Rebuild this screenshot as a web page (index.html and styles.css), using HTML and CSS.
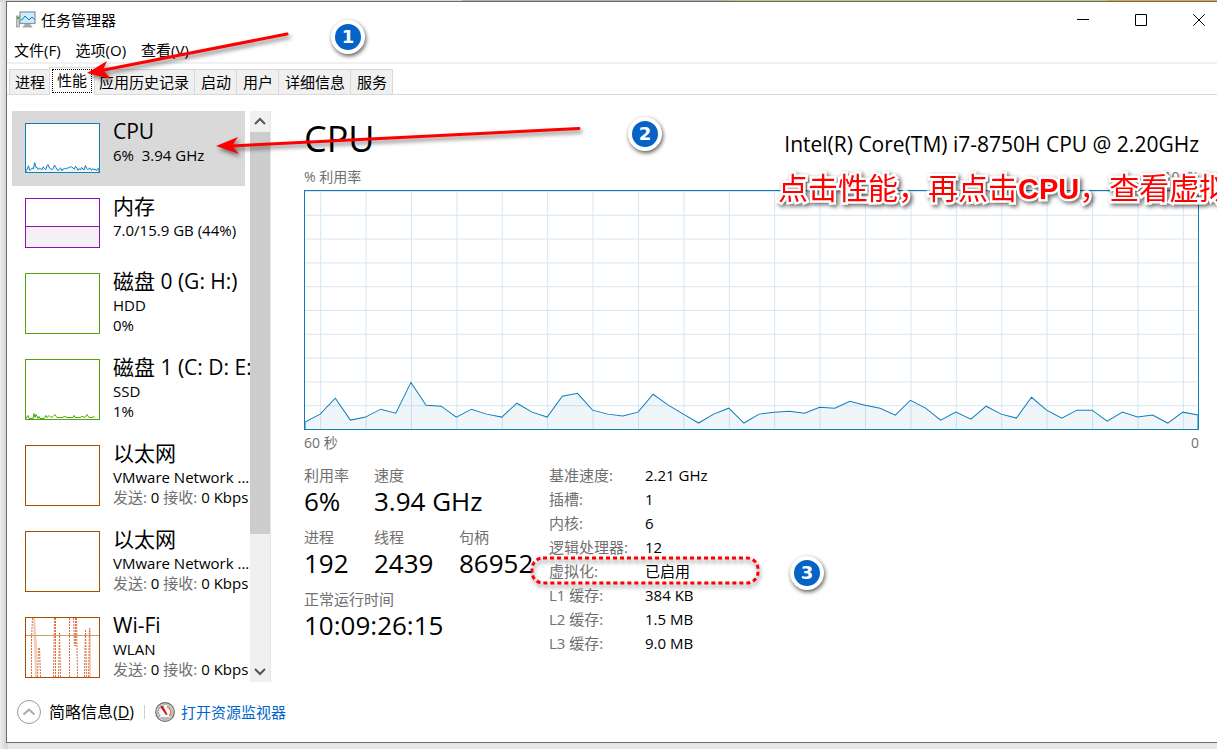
FILE: index.html
```html
<!DOCTYPE html>
<html lang="zh-CN">
<head>
<meta charset="utf-8">
<title>任务管理器</title>
<link rel="stylesheet" href="styles.css">
</head>
<body>
<svg class="defs" aria-hidden="true">
  <defs>
    <path id="cpu-area" d="M0 240V233L15 225 30 209 45 231 60 228 75 220 90 224 105 193 120 216 135 217 150 228 165 220 180 225 195 228 210 214 225 223 240 228 255 207 270 204 285 221 300 225 315 227 330 223 345 205 360 216 375 225 390 234 405 225 420 219 435 234 450 225 465 223 480 222 495 224 510 218 525 219 540 212 555 216 570 219 585 226 600 211 615 219 630 231 645 223 660 230 675 217 690 225 705 229 720 208 735 221 750 229 765 221 780 221 795 232 810 223 825 228 840 226 855 234 870 223 885 226V240" vector-effect="non-scaling-stroke"/>
    <pattern id="grid-cols" x="15" width="45" height="240" patternUnits="userSpaceOnUse"><rect width="1" height="240" fill="#d5e7f2"/></pattern>
    <pattern id="grid-rows" width="885" height="24" patternUnits="userSpaceOnUse"><rect width="885" height="1" fill="#d5e7f2"/></pattern>
  </defs>
</svg>

<div class="window">
  <header class="titlebar">
    <svg class="app-icon" viewBox="0 0 20 18" aria-hidden="true">
      <rect x=".5" y="5" width="3" height="11" fill="#c8c8c8" stroke="#858585" stroke-width=".6"/>
      <rect x="1" y="6" width="2" height="2" fill="#2cbb35"/>
      <rect x="4" y="1" width="15" height="11.500" fill="#c9edfa" stroke="#8b9298" stroke-width="1.200"/>
      <path d="M5 9l1.500-.5L9 5l4 4 3-3 2.500 2.500" fill="none" stroke="#1677a8"/>
      <path d="M9 13h5l3 3.500H6z" fill="#aaa"/>
    </svg>
    <h1>任务管理器</h1>
    <div class="controls">
      <button aria-label="最小化"><svg viewBox="0 0 12 12"><path d="M0 5.500h12"/></svg></button>
      <button aria-label="最大化"><svg viewBox="0 0 12 12"><path d="M.5.500h11v11H.5z"/></svg></button>
      <button aria-label="关闭"><svg viewBox="0 0 12 12"><path d="M.3.300l11.400 11.400M11.700.300.300 11.700"/></svg></button>
    </div>
  </header>
  <nav class="menu">
    <button>文件(F)</button><button>选项(O)</button><button>查看(V)</button>
  </nav>
  <div class="tabs" role="tablist">
    <button role="tab">进程</button>
    <button role="tab" class="active" aria-selected="true"><span>性能</span></button>
    <button role="tab">应用历史记录</button>
    <button role="tab">启动</button>
    <button role="tab">用户</button>
    <button role="tab">详细信息</button>
    <button role="tab">服务</button>
  </div>

  <div class="content">
    <aside class="sidebar">
      <div class="list">
        <button class="item short selected">
          <svg class="mini blue" viewBox="0 0 885 240" preserveAspectRatio="none"><use href="#cpu-area"/></svg>
          <span class="info"><b>CPU</b><span>6%&nbsp; 3.94 GHz</span></span>
        </button>
        <button class="item short">
          <svg class="mini purple" viewBox="0 0 74 48" preserveAspectRatio="none"><path d="M-1 27.500h76V50H-1z"/></svg>
          <span class="info"><b>内存</b><span>7.0/15.9 GB (44%)</span></span>
        </button>
        <button class="item">
          <svg class="mini green"></svg>
          <span class="info"><b>磁盘 0 (G: H:)</b><span>HDD</span><span>0%</span></span>
        </button>
        <button class="item">
          <svg class="mini green" viewBox="0 0 73 59" preserveAspectRatio="none"><path d="M0 58.500l2-3 1 3h4l1-5 1 4 1-3 2 4 1-2 1 2h4l2-3 1 2 2-2 2 2 2-1 2-2 2 3h5l3-1 2 1h6l1-2 1 2h5l2-1 3 1 2-3 2 3h3l2-1 1 1"/></svg>
          <span class="info"><b>磁盘 1 (C: D: E:)</b><span>SSD</span><span>1%</span></span>
        </button>
        <button class="item">
          <svg class="mini brown"></svg>
          <span class="info"><b>以太网</b><span>VMware Network ...</span><span><i>发送:</i> 0 <i>接收:</i> 0 Kbps</span></span>
        </button>
        <button class="item">
          <svg class="mini brown"></svg>
          <span class="info"><b>以太网</b><span>VMware Network ...</span><span><i>发送:</i> 0 <i>接收:</i> 0 Kbps</span></span>
        </button>
        <button class="item">
          <svg class="mini brown" viewBox="0 0 73 59" preserveAspectRatio="none">
            <path class="net-fill" d="M7 0h2l2 26v33H9zM63 10h2v49h-2z"/>
            <path class="net" d="M5.500 59V20L6.500 0M11.500 59l1-30M14.500 59l-1-30M27.500 59L28.500 0M29.500 59V0M32.500 59l1-44M34.500 59l-1-44M43.500 59V0M47.500 0l1 28M50.500 0l1 59M49.500 0v28M58.500 59l1-48M60.500 59l-1-48M62.500 59l1-49"/>
            <path class="scale" d="M0 17.500h73"/>
          </svg>
          <span class="info"><b>Wi-Fi</b><span>WLAN</span><span><i>发送:</i> 0 <i>接收:</i> 0 Kbps</span></span>
        </button>
      </div>
      <div class="scrollbar" aria-hidden="true">
        <svg viewBox="0 0 20 21"><path d="M5 13l5-5 5 5"/></svg>
        <div class="track"><div class="thumb"></div></div>
        <svg viewBox="0 0 20 21"><path d="M5 8l5 5 5-5"/></svg>
      </div>
    </aside>

    <main>
      <div class="heading"><h2>CPU</h2><p>Intel(R) Core(TM) i7-8750H CPU @ 2.20GHz</p></div>
      <div class="caption top"><span>% 利用率</span><span>100%</span></div>
      <svg class="chart" viewBox="0 0 885 240" preserveAspectRatio="none" role="img" aria-label="CPU 利用率">
        <rect width="885" height="240" fill="url(#grid-cols)"/>
        <rect width="885" height="240" fill="url(#grid-rows)"/>
        <use href="#cpu-area"/>
      </svg>
      <div class="caption bottom"><span>60 秒</span><span>0</span></div>
      <div class="details">
        <dl class="stats">
          <div><dt>利用率</dt><dd>6%</dd></div>
          <div class="wide"><dt>速度</dt><dd>3.94 GHz</dd></div>
          <div><dt>进程</dt><dd>192</dd></div>
          <div><dt>线程</dt><dd>2439</dd></div>
          <div><dt>句柄</dt><dd>86952</dd></div>
          <div class="full"><dt>正常运行时间</dt><dd>10:09:26:15</dd></div>
        </dl>
        <dl class="specs">
          <dt>基准速度:</dt><dd>2.21 GHz</dd>
          <dt>插槽:</dt><dd>1</dd>
          <dt>内核:</dt><dd>6</dd>
          <dt>逻辑处理器:</dt><dd>12</dd>
          <dt>虚拟化:</dt><dd>已启用</dd>
          <dt>L1 缓存:</dt><dd>384 KB</dd>
          <dt>L2 缓存:</dt><dd>1.5 MB</dd>
          <dt>L3 缓存:</dt><dd>9.0 MB</dd>
        </dl>
      </div>
    </main>
  </div>

  <footer>
    <button class="fewer">
      <svg viewBox="0 0 24 24" aria-hidden="true"><circle cx="12" cy="12" r="11.500" fill="#fff" stroke="#999"/><path d="M6.500 14.500l5.500-5 5.500 5" fill="none" stroke="#aaa" stroke-width="2"/></svg>
      <span>简略信息(<u>D</u>)</span>
    </button>
    <a href="#" class="monitor">
      <svg viewBox="0 0 20 20" aria-hidden="true">
        <circle cx="10" cy="10" r="9.300" fill="#dfe1e1" stroke="#666b6d" stroke-width="1.200"/>
        <circle cx="10" cy="10" r="7.500" fill="#f7f7f7" stroke="#999" stroke-width=".7"/>
        <path d="M5 14A6 6 0 0 1 9 4" fill="none" stroke="#8d9699" stroke-width="1.300" stroke-dasharray="1.500 1"/>
        <path d="M12 4.500A6 6 0 0 1 14.500 14" fill="none" stroke="#dd8245" stroke-width="1.600"/>
        <path d="M5 4.500l3-.5 4.500 8.500-1.500.5z" fill="#c9151b"/>
        <path d="M6 16h8" stroke="#999" stroke-width="1.200"/>
      </svg>
      <span>打开资源监视器</span>
    </a>
  </footer>
</div>

<div class="notes">
  <svg class="arrows" width="600" height="600" aria-hidden="true">
    <path d="M287 34L104 70" /><path class="head" d="M87 73L107 61 103 70 111 79Z"/>
    <path d="M579 128.500L231 146"/><path class="head" d="M216 146L238 137 232 146 239 154Z"/>
  </svg>
  <span class="badge one">1</span>
  <span class="badge two">2</span>
  <span class="badge three">3</span>
  <svg class="ring" viewBox="0 0 232 32" aria-hidden="true"><rect x="3" y="3" width="226" height="25" rx="11"/></svg>
  <p class="tip">点击性能，再点击<span>CPU</span>，查看虚拟</p>
</div>
</body>
</html>
```
FILE: styles.css
```css
* { box-sizing: border-box; }
body {
  margin: 0;
  min-height: 100vh;
  padding: 1px 0 6px 6px;
  position: relative;
  overflow: hidden;
  display: flex;
  background: linear-gradient(90deg, #d6d6d6 0 38%, #b5b29f 38% 60%, #c9c07a 60% 91%, #dca63f 91%) top / 100% 2px no-repeat, linear-gradient(90deg, #ededed, #d2d2d2 7px, #e6e6e6 8px);
  font: 15px/20px "Open Sans", "Noto Sans CJK SC", sans-serif;
  color: #000;
}
button { font: inherit; color: inherit; border: 0; padding: 0; margin: 0; background: none; text-align: left; }
h1, h2, p, dl, dd { margin: 0; font-weight: 400; }
.defs { position: absolute; width: 0; height: 0; }
.window {
  flex: 1;
  min-width: 0;
  display: flex;
  flex-direction: column;
  background: #fff;
  border: 1px solid #6b6b6b;
  border-right: 0;
}
.titlebar { display: flex; align-items: center; height: 36px; padding: 0 12px 0 9px; gap: 5px; }
.titlebar h1 { font-size: 15px; line-height: 20px; }
.app-icon { width: 20px; height: 18px; }
.controls { display: flex; gap: 46px; margin-left: auto; }
.controls svg { display: block; width: 12px; height: 12px; fill: none; stroke: #000; overflow: visible; }
.menu { display: flex; gap: 15px; height: 26px; padding: 2px 7px 0; border-bottom: 2px solid #f0f0f0; }
.menu button { height: 20px; }
.tabs { display: flex; height: 31px; padding: 5px 2px 0; border-bottom: 1px solid #d9d9d9; }
.tabs button {
  background: #f0f0f0;
  border: 1px solid #d9d9d9;
  border-bottom: 0;
  border-left-width: 0;
  padding: 0 5px 0 6px;
}
.tabs button:first-child { border-left-width: 1px; padding-left: 5px; }
.tabs .active {
  position: relative;
  background: #fff;
  margin: -2px -2px -1px;
  padding: 1px 2px 2px;
  border-left-width: 1px;
}
.active span { display: block; border: 1px dotted #000; padding: 0 4px 2px; }
.content { flex: 1; display: flex; padding-top: 16px; gap: 33px; min-height: 0; }
.sidebar { display: flex; flex: none; height: 571px; padding-left: 5px; }
.list { width: 238px; overflow: hidden; }
.item { display: flex; gap: 13px; width: 100%; height: 86px; padding: 0 0 0 13px; white-space: nowrap; }
.short { height: 75px; }
.selected { width: 233px; background: #d9d9d9; }
.mini { flex: none; width: 75px; height: 61px; margin-top: 12px; border: 1px solid; background: #fff; fill: none; stroke: currentColor; }
.short .mini { height: 50px; }
.blue { color: #117dbb; fill: #f1f6fa; }
.purple { color: #8b12ae; fill: #f4f0f6; }
.green { color: #4da60c; }
.brown { color: #a74f01; }
.net { stroke: #dd6e40; stroke-dasharray: 2 1; }
.net-fill { fill: #f5cdbb; stroke: none; }
.scale { stroke: #c99c6b; }
.info { padding-top: 7px; line-height: 20px; }
.info > * { display: block; }
.info b { font-size: 21px; line-height: 27px; font-weight: 400; }
.info i { font-style: normal; color: #707070; }
.scrollbar { width: 21px; display: flex; flex-direction: column; background: #f0f0f0; border-right: 1px solid #e6e6e6; }
.scrollbar svg { width: 20px; height: 21px; fill: none; stroke: #555; stroke-width: 2; }
.track { flex: 1; }
.thumb { height: 76%; background: #cdcdcd; }
main { flex: 1; min-width: 0; padding: 0 18px 0 0; }
.heading { display: flex; align-items: baseline; justify-content: space-between; height: 56px; }
.heading h2 { font-size: 36px; line-height: 56px; }
.heading p { font-size: 21px; }
.caption { display: flex; justify-content: space-between; font-size: 14px; color: #707070; }
.top { height: 23px; }
.bottom { padding-top: 3px; height: 34px; }
.chart { display: block; width: 100%; height: 240px; border: 1px solid #117dbb; stroke: #117dbb; fill: rgba(17, 125, 187, .065); }
.chart rect { stroke: none; }
.details { display: flex; gap: 15px; }
.stats { display: grid; grid-template-columns: 70px 85px 75px; grid-auto-rows: 62px; }
.stats dt { line-height: 22px; color: #707070; }
.stats dd { font-size: 26px; line-height: 30px; }
.wide { grid-column: span 2; }
.full { grid-column: 1 / -1; }
.specs { display: grid; grid-template-columns: 96px auto; grid-auto-rows: 24px; line-height: 22px; white-space: nowrap; }
.specs dt { color: #707070; }
footer { display: flex; align-items: center; height: 60px; padding-left: 10px; }
.fewer, .monitor { display: flex; align-items: center; gap: 8px; }
.fewer { font-size: 16px; }
.fewer svg { width: 24px; height: 24px; }
.monitor { margin-left: 10px; padding-left: 11px; gap: 6px; color: #0066cc; text-decoration: none; background: linear-gradient(#d0d0d0, #d0d0d0) left / 1px 14px no-repeat; }
.monitor svg { width: 20px; height: 20px; }

/* Callouts drawn over the window */
.notes { position: absolute; inset: 0; overflow: hidden; pointer-events: none; }
.arrows { position: absolute; left: 0; top: 0; fill: none; stroke: #f00; stroke-width: 3; stroke-linecap: round; filter: drop-shadow(2px 3px 2px rgba(0, 0, 0, .5)); }
.arrows .head { fill: #f00; stroke: none; }
.badge {
  position: absolute;
  width: 34px;
  height: 34px;
  border: 4px solid #fff;
  border-radius: 50%;
  background: #0563c8;
  color: #fff;
  font: bold 18px/26px "DejaVu Sans", sans-serif;
  text-align: center;
  box-shadow: 1px 2px 4px rgba(0, 0, 0, .65);
}
.one { left: 331px; top: 20px; }
.two { left: 628px; top: 117px; }
.three { left: 790px; top: 556px; }
.ring { position: absolute; left: 529px; top: 555px; width: 232px; height: 32px; fill: none; stroke: #f00; stroke-width: 3; stroke-dasharray: 4 3; overflow: visible; filter: drop-shadow(1px 3px 2px rgba(0, 0, 0, .5)); }
.tip {
  position: absolute;
  left: 778px;
  top: 165px;
  white-space: nowrap;
  color: #f00;
  font: 400 30px/42px "Noto Sans CJK SC", sans-serif;
  -webkit-text-stroke: 5px #fff;
  paint-order: stroke fill;
  filter: drop-shadow(2px 2px 2px rgba(0, 0, 0, .6));
}
.tip span { font: bold 29px "Liberation Sans", sans-serif; }
```
